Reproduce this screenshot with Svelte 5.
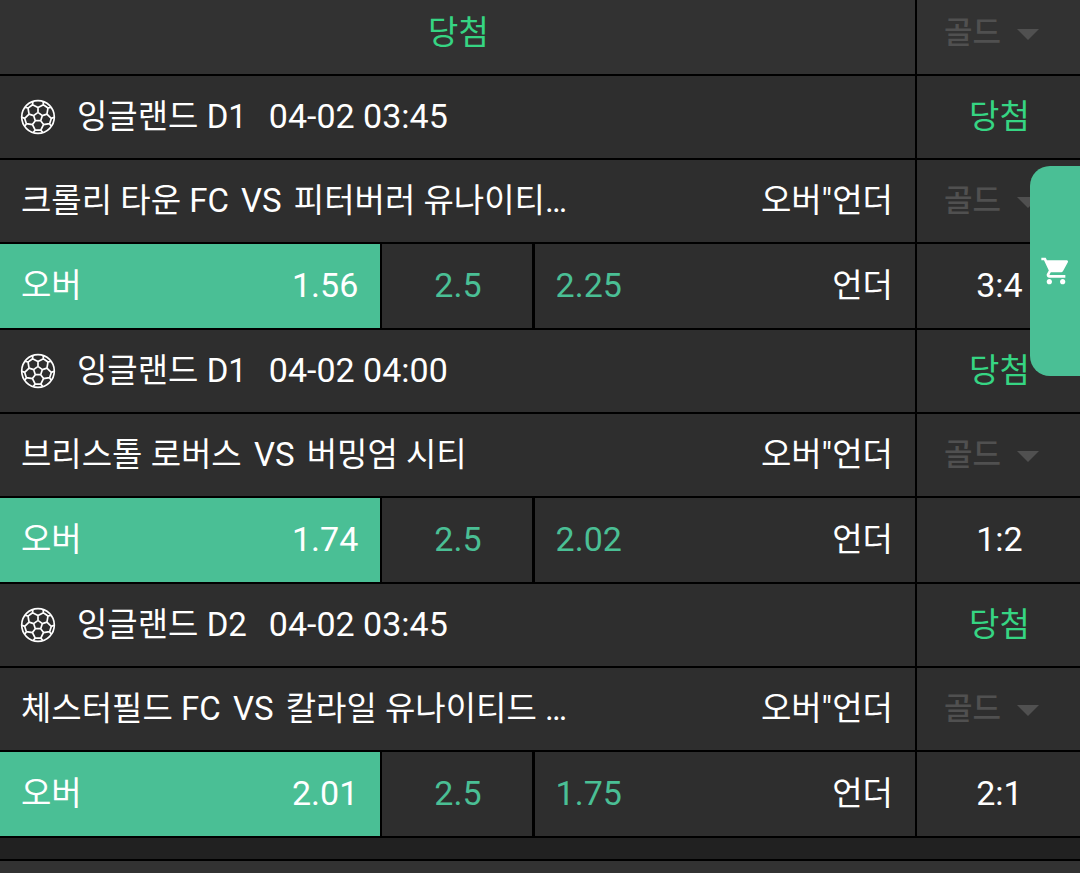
<script>
  const games = [
    { league: '잉글랜드 D1', time: '04-02 03:45', home: '크롤리 타운 FC', away: '피터버러 유나이티…', over: '1.56', line: '2.5', under: '2.25', score: '3:4' },
    { league: '잉글랜드 D1', time: '04-02 04:00', home: '브리스톨 로버스', away: '버밍엄 시티', over: '1.74', line: '2.5', under: '2.02', score: '1:2' },
    { league: '잉글랜드 D2', time: '04-02 03:45', home: '체스터필드 FC', away: '칼라일 유나이티드 …', over: '2.01', line: '2.5', under: '1.75', score: '2:1' }
  ];

  // Seams of a football seen with one pentagon facing the viewer.
  const at = (radius, degrees) => {
    const a = (degrees * Math.PI) / 180;
    return `${(18 + radius * Math.cos(a)).toFixed(2)} ${(18 + radius * Math.sin(a)).toFixed(2)}`;
  };
  const seams = [0, 1, 2, 3, 4]
    .map((k) => {
      const d = -90 + 72 * k;
      return (
        `M${at(4.6, d)}L${at(4.6, d + 72)}M${at(4.6, d)}L${at(9.4, d)}` +
        `M${at(13.4, d - 24)}L${at(9.4, d)}L${at(13.4, d + 24)}L${at(13.4, d + 48)}` +
        `M${at(13.4, d - 24)}L${at(16, d - 19)}M${at(13.4, d + 24)}L${at(16, d + 19)}`
      );
    })
    .join('');
</script>

{#snippet gold()}
  <label class="gold">
    <select disabled aria-label="골드"><option>골드</option></select>
    <svg width="22" height="12" viewBox="0 0 22 12" aria-hidden="true"><path d="M0 0h22L11 11z" /></svg>
  </label>
{/snippet}

<main>
  <table>
    <colgroup>
      <col class="wide" /><col class="mid" /><col class="wide" /><col />
    </colgroup>
    <thead>
      <tr>
        <th colspan="3" class="won">당첨</th>
        <td>{@render gold()}</td>
      </tr>
    </thead>
    {#each games as game}
      <tbody>
        <tr>
          <td colspan="3">
            <div class="league">
              <svg class="ball" width="36" height="36" viewBox="0 0 36 36" aria-hidden="true">
                <circle cx="18" cy="18" r="16.3" /><path d={seams} />
              </svg>
              <span>{game.league}</span>
              <time class="number">{game.time}</time>
            </div>
          </td>
          <td class="won">당첨</td>
        </tr>
        <tr>
          <td colspan="3">
            <div class="pair">
              <span>{game.home} <span class="versus">VS</span> {game.away}</span>
              <span>오버"언더</span>
            </div>
          </td>
          <td>{@render gold()}</td>
        </tr>
        <tr class="odds">
          <td class="picked">
            <div class="pair"><span>오버</span><span class="number">{game.over}</span></div>
          </td>
          <td class="line number">{game.line}</td>
          <td>
            <div class="pair"><span class="rate number">{game.under}</span><span>언더</span></div>
          </td>
          <td class="score number">{game.score}</td>
        </tr>
      </tbody>
    {/each}
  </table>
  <div class="next"></div>
</main>

<button class="cart" aria-label="장바구니">
  <svg width="32" height="32" viewBox="0 0 24 24" aria-hidden="true">
    <path d="M7 18c-1.1 0-1.99.9-1.99 2S5.9 22 7 22s2-.9 2-2-.9-2-2-2zM1 2v2h2l3.6 7.59-1.35 2.45c-.16.28-.25.61-.25.96 0 1.1.9 2 2 2h12v-2H7.42c-.14 0-.25-.11-.25-.25l.03-.12.9-1.63h7.45c.75 0 1.41-.41 1.75-1.03l3.58-6.49c.08-.14.12-.31.12-.48 0-.55-.45-1-1-1H5.21l-.94-2H1zm16 16c-1.1 0-1.99.9-1.99 2s.89 2 1.99 2 2-.9 2-2-.9-2-2-2z" />
  </svg>
</button>

<style>
  :global(body) {
    margin: 0;
    background: #212121;
  }

  main {
    display: flex;
    flex-direction: column;
    min-height: 100vh;
    overflow: hidden;
    color: #fff;
    font: 33px/40px Roboto, 'Noto Sans CJK KR', sans-serif;
  }

  table {
    width: 100%;
    table-layout: fixed;
    border-collapse: separate;
    border-spacing: 0;
  }

  .wide {
    width: 35.4%;
  }

  .mid {
    width: 14.1%;
  }

  th,
  td {
    box-sizing: border-box;
    height: 84px;
    padding: 0 22px 0 21px;
    border: 0 solid #000;
    border-width: 0 2px 2px 0;
    background: #2e2e2e;
    font-weight: 400;
  }

  tr > :last-child {
    border-right-width: 0;
  }

  .won,
  .line,
  .score {
    padding: 0 20px 0 22px;
    text-align: center;
  }

  thead .won,
  thead td {
    height: 76px;
    padding-bottom: 8px;
    background: #323232;
  }

  .odds td {
    height: 86px;
  }

  .odds .picked {
    background: #4abf95;
  }

  .number {
    padding-bottom: 2px;
    font-size: 34px;
  }

  .line {
    border-right-width: 3px;
  }

  .line,
  .rate {
    color: #4abf95;
  }

  .won {
    color: #36d583;
  }

  .league {
    display: flex;
    align-items: center;
  }

  .ball {
    margin: 0 21px 0 -1px;
    fill: none;
    stroke: #fff;
    stroke-width: 1.7;
  }

  time {
    margin-left: 22px;
  }

  .pair {
    display: flex;
    align-items: center;
    justify-content: space-between;
    white-space: nowrap;
  }

  .versus {
    margin: 0 4px;
  }

  .gold {
    display: flex;
    align-items: center;
    gap: 15px;
    margin-left: 6px;
  }

  select {
    appearance: none;
    padding: 0;
    border: 0;
    background: none;
    color: #505050;
    font: 500 31px/40px Roboto, 'Noto Sans CJK KR', sans-serif;
    opacity: 1;
  }

  .gold svg {
    margin-top: 3px;
    fill: #505050;
  }

  .next {
    flex: 1;
    margin-top: 21px;
    border-top: 2px solid #000;
    background: #323232;
  }

  .cart {
    position: fixed;
    top: 166px;
    right: 0;
    display: flex;
    align-items: center;
    width: 50px;
    height: 210px;
    padding: 0 10px;
    border: 0;
    border-radius: 20px 0 0 20px;
    background: #4abf95;
  }

  .cart svg {
    flex: none;
    fill: #fff;
  }
</style>
